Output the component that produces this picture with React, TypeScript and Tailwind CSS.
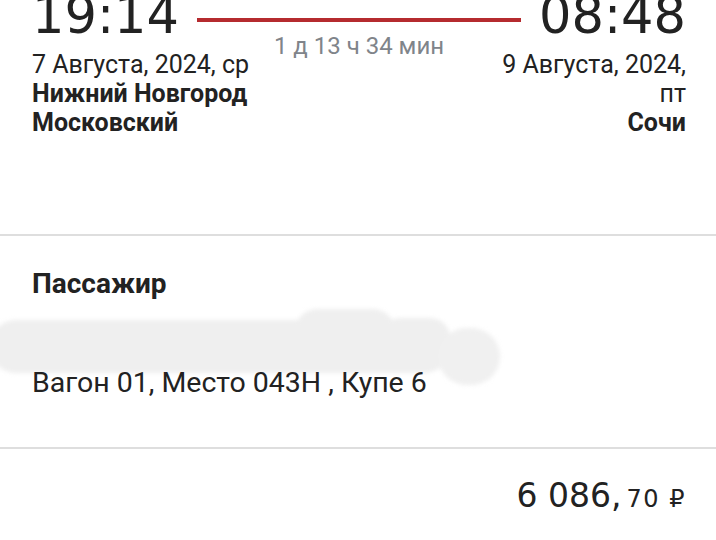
import React from 'react';

const plex = { fontFamily: '"Roboto", "Noto Sans", sans-serif' };

// redaction smear over the passenger name
const Smear: React.FC = () => (
  <div className="absolute inset-0 blur-[2px]">
    <div className="absolute left-[-10px] top-[20px] w-[460px] h-[53px] rounded-[26px] bg-[#efefef]" />
    <div className="absolute left-[295px] top-[9px] w-[100px] h-[44px] rounded-full bg-[#efefef]" />
    <div className="absolute left-[380px] top-[18px] w-[70px] h-[40px] rounded-full bg-[#efefef]" />
    <div className="absolute left-[438px] top-[28px] w-[62px] h-[57px] rounded-full bg-[#f0f0f0]" />
  </div>
);

const App: React.FC = () => {
  return (
    <div className="w-[716px] h-[540px] overflow-hidden bg-white text-[#222222]" style={plex}>
      {/* Route */}
      <div className="pl-8 pr-[30px] -mt-[14px] h-[248px]">
        <div className="flex items-start">
          <span className="font-['DejaVu_Sans',sans-serif] text-[51px] leading-[60px]">19:14</span>
          <div className="flex-1 flex flex-col items-center mx-[18px] pt-[32px]">
            <div className="w-full h-[4px] bg-[#b52b2f]" />
            <span className="mt-[10px] text-[24px] leading-[28px] text-[#80848a] -mb-[14px]">1 д 13 ч 34 мин</span>
          </div>
          <span className="font-['DejaVu_Sans',sans-serif] text-[51px] leading-[60px]">08:48</span>
        </div>
        <div className="mt-[4px] flex justify-between text-[25px] leading-[29px]">
          <div className="w-[240px]">
            <div>7 Августа, 2024, ср</div>
            <div className="font-bold">Нижний Новгород Московский</div>
          </div>
          <div className="w-[200px] text-right">
            <div>9 Августа, 2024, пт</div>
            <div className="font-bold">Сочи</div>
          </div>
        </div>
      </div>

      <div className="h-[2px] bg-[#dedede]" />

      {/* Passenger */}
      <div className="h-[211px] pt-[32px]">
        <div className="px-8 text-[28px] leading-[32px] font-bold">Пассажир</div>
        <div className="relative h-[67px]">
          <Smear />
        </div>
        <div className="relative px-8 text-[28.5px] leading-[32px]">Вагон 01, Место 043Н , Купе 6</div>
      </div>

      <div className="h-[2px] bg-[#dedede]" />

      {/* Price */}
      <div className="pl-8 pr-[30px] pt-[27px] flex justify-end items-baseline font-['DejaVu_Sans',sans-serif]">
        <span className="text-[33px] leading-[40px]">6 086,</span>
        <span className="text-[24px] ml-[5px] tracking-[1.5px]">70 ₽</span>
      </div>
    </div>
  );
};

export default App;
